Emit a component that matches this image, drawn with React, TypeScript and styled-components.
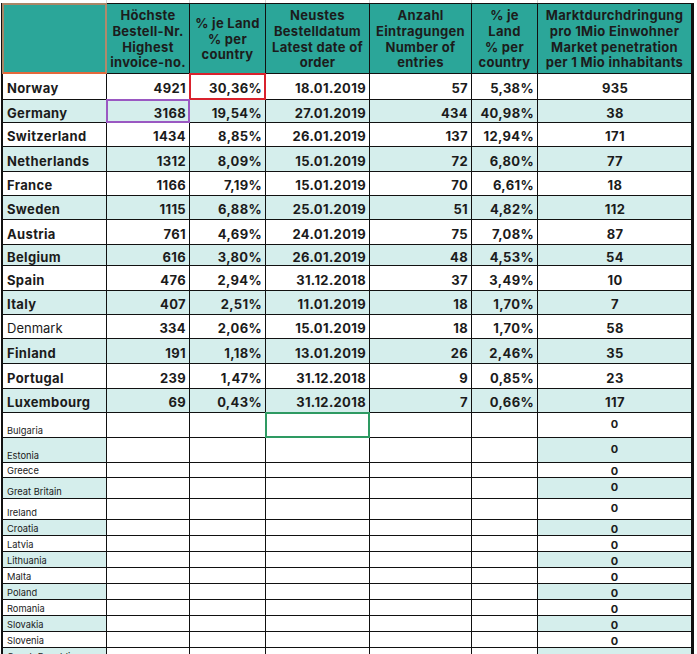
import React from "react";
import styled, { createGlobalStyle, css } from "styled-components";

const GlobalStyle = createGlobalStyle`
  html, body { margin: 0; padding: 0; background: #ffffff; }
  body {
    width: 697px;
    height: 654px;
    overflow: hidden;
    font-family: Inter, "Open Sans", "DejaVu Sans", sans-serif;
    color: #1b1b1b;
  }
`;

const COLS = "103px 82px 75px 103px 101px 65px 153px";

const Page = styled.div`
  display: flex;
  flex-direction: column;
`;

const Strip = styled.div`
  display: grid;
  grid-template-columns: ${COLS};
  column-gap: 1px;
  height: 3px;
  margin-left: 3px;
  width: fit-content;
  background: #d4d4d4;
  & > span { background: #ffffff; }
`;

const Sheet = styled.div`
  display: flex;
  flex-direction: column;
  gap: 1px;
  width: fit-content;
  margin-left: 1px;
  background: #111111;
  border-top: 1px solid #111111;
  border-left: 2px solid #111111;
  border-right: 3px solid #111111;
`;

const Row = styled.div<{ $h: number }>`
  display: grid;
  grid-template-columns: ${COLS};
  column-gap: 1px;
  height: ${(p) => p.$h}px;
`;

type Fill = "white" | "tint" | "head";
type Frame = "none" | "red" | "purple" | "green" | "corner";

const fills: Record<Fill, string> = {
  white: "#ffffff",
  tint: "#d5eeec",
  head: "#2ba699",
};

const frames: Record<Exclude<Frame, "none">, string> = {
  red: "#d9222d",
  purple: "#9a58c2",
  green: "#2e9a62",
  corner: "#a98667 #b08a6c #e3693b #a98667",
};

const Cell = styled.div<{
  $fill: Fill;
  $align?: "left" | "right" | "center";
  $valign?: "center" | "end";
  $weight?: number;
  $size?: number;
  $pad?: string;
  $frame?: Frame;
}>`
  position: relative;
  display: flex;
  overflow: visible;
  white-space: nowrap;
  background: ${(p) => fills[p.$fill]};
  font-size: ${(p) => p.$size ?? 13}px;
  font-weight: ${(p) => p.$weight ?? 700};
  letter-spacing: ${(p) => ((p.$weight ?? 700) >= 700 && (p.$size ?? 13) >= 13 ? "0.35px" : "0")};
  justify-content: ${(p) =>
    p.$align === "right" ? "flex-end" : p.$align === "center" ? "center" : "flex-start"};
  align-items: ${(p) => (p.$valign === "end" ? "flex-end" : "center")};
  padding: ${(p) => p.$pad ?? (p.$valign === "end" ? "0 3px 0 4px" : "3px 3px 0 4px")};
  line-height: ${(p) => (p.$valign === "end" ? "12px" : "16px")};
  ${(p) =>
    p.$frame && p.$frame !== "none"
      ? css`
          &::after {
            content: "";
            position: absolute;
            inset: -1px;
            border: 2px solid;
            border-color: ${frames[p.$frame]};
            pointer-events: none;
            z-index: 1;
          }
        `
      : ""}
`;

const HeadCell = styled.div<{ $frame?: Frame }>`
  position: relative;
  display: flex;
  align-items: center;
  justify-content: center;
  text-align: center;
  background: ${fills.head};
  color: #1c1c1c;
  font-size: 13px;
  font-weight: 700;
  letter-spacing: 0.3px;
  line-height: 15.7px;
  white-space: nowrap;
  padding-top: 2px;
  ${(p) =>
    p.$frame && p.$frame !== "none"
      ? css`
          &::after {
            content: "";
            position: absolute;
            inset: -1px;
            border: 2px solid;
            border-color: ${frames[p.$frame]};
          }
        `
      : ""}
`;

type TopRow = {
  name: string;
  inv: string;
  pct: string;
  date: string;
  entries: string;
  pct2: string;
  market: string;
  h: number;
  light?: boolean;
};

const topRows: TopRow[] = [
  { name: "Norway", inv: "4921", pct: "30,36%", date: "18.01.2019", entries: "57", pct2: "5,38%", market: "935", h: 25 },
  { name: "Germany", inv: "3168", pct: "19,54%", date: "27.01.2019", entries: "434", pct2: "40,98%", market: "38", h: 22 },
  { name: "Switzerland", inv: "1434", pct: "8,85%", date: "26.01.2019", entries: "137", pct2: "12,94%", market: "171", h: 23 },
  { name: "Netherlands", inv: "1312", pct: "8,09%", date: "15.01.2019", entries: "72", pct2: "6,80%", market: "77", h: 24 },
  { name: "France", inv: "1166", pct: "7,19%", date: "15.01.2019", entries: "70", pct2: "6,61%", market: "18", h: 23 },
  { name: "Sweden", inv: "1115", pct: "6,88%", date: "25.01.2019", entries: "51", pct2: "4,82%", market: "112", h: 23 },
  { name: "Austria", inv: "761", pct: "4,69%", date: "24.01.2019", entries: "75", pct2: "7,08%", market: "87", h: 24 },
  { name: "Belgium", inv: "616", pct: "3,80%", date: "26.01.2019", entries: "48", pct2: "4,53%", market: "54", h: 20 },
  { name: "Spain", inv: "476", pct: "2,94%", date: "31.12.2018", entries: "37", pct2: "3,49%", market: "10", h: 24 },
  { name: "Italy", inv: "407", pct: "2,51%", date: "11.01.2019", entries: "18", pct2: "1,70%", market: "7", h: 23 },
  { name: "Denmark", inv: "334", pct: "2,06%", date: "15.01.2019", entries: "18", pct2: "1,70%", market: "58", h: 23, light: true },
  { name: "Finland", inv: "191", pct: "1,18%", date: "13.01.2019", entries: "26", pct2: "2,46%", market: "35", h: 24 },
  { name: "Portugal", inv: "239", pct: "1,47%", date: "31.12.2018", entries: "9", pct2: "0,85%", market: "23", h: 24 },
  { name: "Luxembourg", inv: "69", pct: "0,43%", date: "31.12.2018", entries: "7", pct2: "0,66%", market: "117", h: 23 },
];

const lowRows: { name: string; h: number }[] = [
  { name: "Bulgaria", h: 24 },
  { name: "Estonia", h: 24 },
  { name: "Greece", h: 14 },
  { name: "Great Britain", h: 20 },
  { name: "Ireland", h: 20 },
  { name: "Croatia", h: 15 },
  { name: "Latvia", h: 15 },
  { name: "Lithuania", h: 15 },
  { name: "Malta", h: 15 },
  { name: "Poland", h: 15 },
  { name: "Romania", h: 15 },
  { name: "Slovakia", h: 15 },
  { name: "Slovenia", h: 15 },
  { name: "Czech Republic", h: 15 },
];

const headers: string[][] = [
  [],
  ["Höchste", "Bestell-Nr.", "Highest", "invoice-no."],
  ["% je Land", "% per", "country"],
  ["Neustes", "Bestelldatum", "Latest date of", "order"],
  ["Anzahl", "Eintragungen", "Number of", "entries"],
  ["% je", "Land", "% per", "country"],
  ["Marktdurchdringung", "pro 1Mio Einwohner", "Market penetration", "per 1 Mio inhabitants"],
];

export default function App() {
  return (
    <Page>
      <GlobalStyle />
      <Strip>
        {headers.map((_, i) => (
          <span key={i} />
        ))}
      </Strip>
      <Sheet>
        <Row $h={69}>
          {headers.map((lines, i) => (
            <HeadCell key={i} $frame={i === 0 ? "corner" : "none"}>
              <div>
                {lines.map((l, j) => (
                  <div key={j}>{l}</div>
                ))}
              </div>
            </HeadCell>
          ))}
        </Row>
        {topRows.map((r, i) => {
          const fill: Fill = i % 2 === 1 ? "tint" : "white";
          return (
            <Row key={r.name} $h={r.h}>
              <Cell $fill={fill} $weight={r.light ? 400 : 700}>{r.name}</Cell>
              <Cell $fill={fill} $align="right" $frame={i === 1 ? "purple" : "none"}>{r.inv}</Cell>
              <Cell $fill={fill} $align="right" $frame={i === 0 ? "red" : "none"}>{r.pct}</Cell>
              <Cell $fill={fill} $align="right">{r.date}</Cell>
              <Cell $fill={fill} $align="right">{r.entries}</Cell>
              <Cell $fill={fill} $align="right">{r.pct2}</Cell>
              <Cell $fill={fill} $align="center">{r.market}</Cell>
            </Row>
          );
        })}
        {lowRows.map((r, i) => {
          const fill: Fill = i % 2 === 1 ? "tint" : "white";
          const tall = r.h >= 20;
          const last = i === lowRows.length - 1;
          return (
            <Row key={r.name} $h={r.h}>
              <Cell $fill={fill} $valign="end" $weight={400} $size={9.3} $pad="0 3px 0 4px">
                {r.name}
              </Cell>
              <Cell $fill="white" />
              <Cell $fill="white" />
              <Cell $fill="white" $frame={i === 0 ? "green" : "none"} />
              <Cell $fill="white" />
              <Cell $fill="white" />
              <Cell
                $fill={fill}
                $align="center"
                $valign={tall ? "center" : "end"}
                $size={11}
                $pad={tall ? "0 0 3px" : "0 0 0"}
              >
                {last ? "" : "0"}
              </Cell>
            </Row>
          );
        })}
      </Sheet>
    </Page>
  );
}
